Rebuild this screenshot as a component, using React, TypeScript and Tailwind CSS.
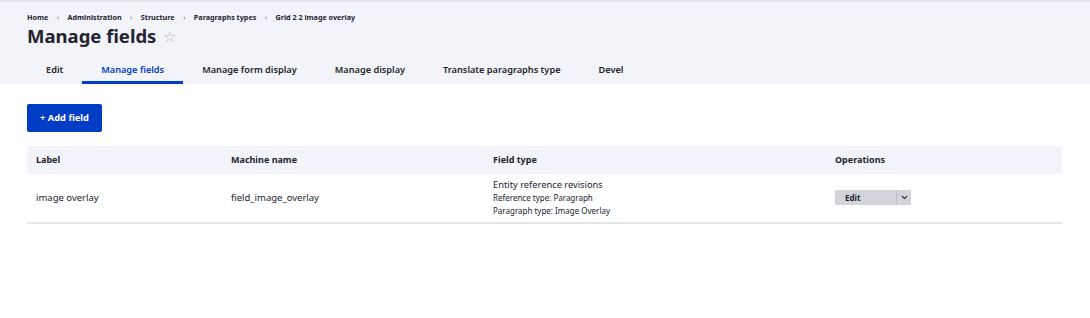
import { ChevronDown } from "lucide-react"

const crumbs = ["Home", "Administration", "Structure", "Paragraphs types", "Grid 2 2 image overlay"]

const tabs = [
  { id: "edit", label: "Edit" },
  { id: "fields", label: "Manage fields", active: true },
  { id: "form", label: "Manage form display" },
  { id: "display", label: "Manage display" },
  { id: "translate", label: "Translate paragraphs type" },
  { id: "devel", label: "Devel" },
]

export default function App() {
  return (
    <div className="w-[1090px] h-[318px] bg-white text-[#222330]" style={{ fontFamily: '"Noto Sans", "Open Sans", sans-serif' }}>
      {/* Page header */}
      <div className="bg-[#f3f4f9] border-t-2 border-[#e6e7ee] pl-[27px] h-[84px]">
        <nav className="flex items-center pt-[9px] h-[23px] text-[7.2px] font-bold leading-none">
          {crumbs.map((c, i) => (
            <span key={c} className="flex items-center">
              {i > 0 && <span className="mx-[8.5px] font-normal text-[#55565b]">›</span>}
              <span>{c}</span>
            </span>
          ))}
        </nav>
        <div className="flex items-center h-[23px]">
          <h1 className="text-[18.5px] font-bold leading-none">Manage fields</h1>
          <span className="ml-[7px] text-[15px] leading-none text-[#b3b4bb]">☆</span>
        </div>
        <div className="flex mt-[11px]">
          {tabs.map((t) => (
            <div
              key={t.id}
              className={`px-[19px] first:pl-[19px] h-[25px] flex items-center text-[9.2px] font-semibold border-b-[3px] ${
                t.active ? "text-[#003cc5] border-[#003cc5]" : "text-[#232429] border-transparent"
              }`}
            >
              {t.label}
            </div>
          ))}
        </div>
      </div>

      {/* Content */}
      <div className="px-[27px] pt-[19px]">
        <button className="bg-[#003cc5] text-white text-[9.3px] font-bold h-[28px] w-[75px] rounded-[2px]">
          + Add field
        </button>

        <table className="mt-[14px] w-[1035px] text-left border-collapse">
          <thead>
            <tr className="bg-[#f3f4f9] h-[28px] text-[9px] font-bold">
              <th className="pl-[9px] w-[204px] rounded-l-[4px]">Label</th>
              <th className="w-[262px]">Machine name</th>
              <th className="w-[342px]">Field type</th>
              <th className="rounded-r-[4px]">Operations</th>
            </tr>
          </thead>
          <tbody>
            <tr className="h-[49px] border-b-2 border-[#e5e5ea] text-[9.5px]">
              <td className="pl-[9px]">image overlay</td>
              <td>field_image_overlay</td>
              <td className="leading-[13px]">
                <div className="text-[9.3px]">Entity reference revisions</div>
                <div className="text-[8px]">Reference type: Paragraph</div>
                <div className="text-[8px]">Paragraph type: Image Overlay</div>
              </td>
              <td>
                <div className="flex w-[76px] h-[15px] bg-[#d3d4d9] rounded-[1px] text-[8px] font-bold">
                  <span className="flex-1 flex items-center pl-[10px]">Edit</span>
                  <span className="w-[15px] flex items-center justify-center border-l border-[#c0c1c6]">
                    <ChevronDown className="w-[9px] h-[9px]" strokeWidth={3} />
                  </span>
                </div>
              </td>
            </tr>
          </tbody>
        </table>
      </div>
    </div>
  )
}
